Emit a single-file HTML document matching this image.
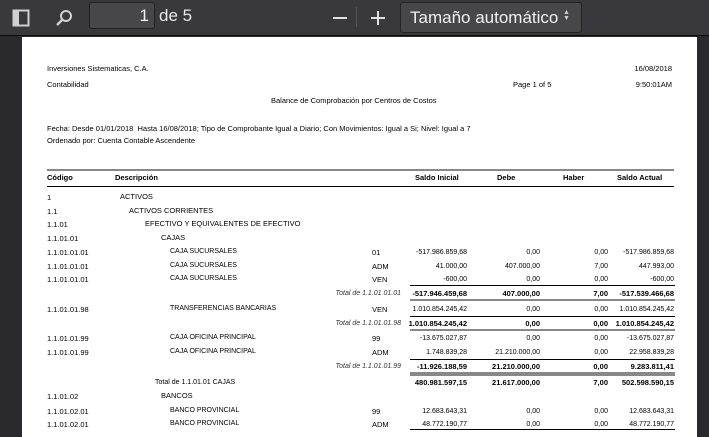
<!DOCTYPE html><html><head><meta charset="utf-8"><style>
*{margin:0;padding:0;box-sizing:border-box}
body{width:709px;height:431px;overflow:hidden;background:#2a2a2e;font-family:"Liberation Sans",sans-serif;position:relative}
#tb{position:absolute;left:0;top:0;width:709px;height:36px;background:#38383d;border-bottom:1px solid #0c0c0d}
#pg{position:absolute;left:22px;top:37px;width:675px;height:400px;background:#fff}
.t{position:absolute;font-size:7.5px;color:#000;white-space:nowrap;line-height:9px}
.r{text-align:right}
.b{font-weight:bold}
.i{font-style:italic}
.s{font-size:7px}
.l{position:absolute;height:1px;background:#000}
.g{position:absolute;height:2px;background:#888}
</style></head><body>
<div id="tb">
<svg style="position:absolute;left:12px;top:9px" width="18" height="18"><rect x="1.5" y="1.5" width="15" height="15" fill="none" stroke="#d0d0d0" stroke-width="2"/><rect x="2" y="2" width="5" height="14" fill="#d0d0d0"/></svg>
<svg style="position:absolute;left:55px;top:8px" width="20" height="20"><circle cx="11" cy="8" r="5" fill="none" stroke="#d0d0d0" stroke-width="2"/><line x1="7.5" y1="11.5" x2="2" y2="17" stroke="#d0d0d0" stroke-width="2.5"/></svg>
<div style="position:absolute;left:89px;top:2px;width:66px;height:27px;background:#474749;border:1px solid #222;border-radius:3px;color:#f0f0f0;font-size:17px;text-align:right;padding:3px 5px 0 0">1</div>
<div style="position:absolute;left:159px;top:6px;color:#e8e8e8;font-size:17px">de 5</div>
<div style="position:absolute;left:333px;top:17px;width:14px;height:2px;background:#e0e0e0"></div>
<div style="position:absolute;left:356px;top:7px;width:1px;height:20px;background:#555"></div>
<div style="position:absolute;left:371px;top:17px;width:14px;height:2px;background:#e0e0e0"></div>
<div style="position:absolute;left:377px;top:11px;width:2px;height:14px;background:#e0e0e0"></div>
<div style="position:absolute;left:400px;top:2px;width:182px;height:31px;background:#474749;border:1px solid #222;border-radius:3px;color:#f0f0f0;font-size:17px;padding:5px 0 0 9px">Tamaño automático</div>
<div style="position:absolute;left:563px;top:10px;color:#ccc;font-size:7px;line-height:6px">▲<br>▼</div>
</div>
<div id="pg"></div>
<div class="t" style="left:47px;top:64px">Inversiones Sistematicas, C.A.</div>
<div class="t r" style="left:600px;top:64px;width:72px">16/08/2018</div>
<div class="t" style="left:47px;top:80px">Contabilidad</div>
<div class="t" style="left:513px;top:80px">Page 1 of 5</div>
<div class="t r" style="left:600px;top:80px;width:72px">9:50:01AM</div>
<div class="t" style="left:271px;top:96px">Balance de Comprobación por Centros de Costos</div>
<div class="t" style="left:47px;top:124px">Fecha: Desde 01/01/2018&nbsp; Hasta 16/08/2018; Tipo de Comprobante Igual a Diario; Con Movimientos: Igual a Si; Nivel: Igual a 7</div>
<div class="t" style="left:47px;top:136px">Ordenado por: Cuenta Contable Ascendente</div>
<div class="g" style="left:47px;top:169px;width:627px"></div>
<div class="t b" style="left:47px;top:173px">Código</div>
<div class="t b" style="left:115px;top:173px">Descripción</div>
<div class="t b" style="left:415px;top:173px">Saldo Inicial</div>
<div class="t b" style="left:497px;top:173px">Debe</div>
<div class="t b" style="left:563px;top:173px">Haber</div>
<div class="t b" style="left:617px;top:173px">Saldo Actual</div>
<div class="l" style="left:47px;top:186px;width:627px"></div>
<div class="t" style="left:47px;top:193px">1</div><div class="t" style="left:120px;top:192px">ACTIVOS</div>
<div class="t" style="left:47px;top:207px">1.1</div><div class="t" style="left:129px;top:206px">ACTIVOS CORRIENTES</div>
<div class="t" style="left:47px;top:220px">1.1.01</div><div class="t" style="left:145px;top:219px">EFECTIVO Y EQUIVALENTES DE EFECTIVO</div>
<div class="t" style="left:47px;top:234px">1.1.01.01</div><div class="t" style="left:161px;top:233px">CAJAS</div>

<div id="rows"></div>
<script>
var R=[
[248,"1.1.01.01.01","CAJA SUCURSALES","01","-517.986.859,68","0,00","0,00","-517.986.859,68"],
[262,"1.1.01.01.01","CAJA SUCURSALES","ADM","41.000,00","407.000,00","7,00","447.993,00"],
[275,"1.1.01.01.01","CAJA SUCURSALES","VEN","-600,00","0,00","0,00","-600,00"],
[305,"1.1.01.01.98","TRANSFERENCIAS BANCARIAS","VEN","1.010.854.245,42","0,00","0,00","1.010.854.245,42"],
[334,"1.1.01.01.99","CAJA OFICINA PRINCIPAL","99","-13.675.027,87","0,00","0,00","-13.675.027,87"],
[348,"1.1.01.01.99","CAJA OFICINA PRINCIPAL","ADM","1.748.839,28","21.210.000,00","0,00","22.958.839,28"],
[407,"1.1.01.02.01","BANCO PROVINCIAL","99","12.683.643,31","0,00","0,00","12.683.643,31"],
[420,"1.1.01.02.01","BANCO PROVINCIAL","ADM","48.772.190,77","0,00","0,00","48.772.190,77"]];
var T=[
[289,"Total de 1.1.01.01.01","-517.946.459,68","407.000,00","7,00","-517.539.466,68"],
[319,"Total de 1.1.01.01.98","1.010.854.245,42","0,00","0,00","1.010.854.245,42"],
[362,"Total de 1.1.01.01.99","-11.926.188,59","21.210.000,00","0,00","9.283.811,41"]];
var h="",rx=[467,540,608,674],w=[90,70,50,80];
function nums(y,a,cls){for(var i=0;i<4;i++)h+='<div class="t r '+cls+'" style="left:'+(rx[i]-w[i])+'px;top:'+y+'px;width:'+w[i]+'px">'+a[i]+'</div>';}
R.forEach(function(r){h+='<div class="t" style="left:47px;top:'+r[0]+'px">'+r[1]+'</div><div class="t s" style="left:170px;top:'+(r[0]-1)+'px">'+r[2]+'</div><div class="t" style="left:372px;top:'+r[0]+'px">'+r[3]+'</div>';nums(r[0],r.slice(4),"s");});
[[285],[316],[359]].forEach(function(y){h+='<div class="l" style="left:410px;top:'+y[0]+'px;width:265px"></div>';});
T.forEach(function(r){h+='<div class="t i s r" style="left:280px;top:'+r[0]+'px;width:121px;color:#333">'+r[1]+'</div>';nums(r[0],r.slice(2),"b");
h+='<div class="g" style="left:410px;top:'+(r[0]+10)+'px;width:265px"></div>';});
h+='<div class="g" style="left:410px;top:374px;width:265px"></div>';
h+='<div class="t s" style="left:155px;top:378px">Total de 1.1.01.01 CAJAS</div>';nums(378,["480.981.597,15","21.617.000,00","7,00","502.598.590,15"],"b");
h+='<div class="t" style="left:47px;top:392px">1.1.01.02</div><div class="t" style="left:161px;top:391px">BANCOS</div>';
h+='<div class="l" style="left:410px;top:429px;width:265px"></div>';
document.getElementById("rows").innerHTML=h;
</script>
</body></html>
